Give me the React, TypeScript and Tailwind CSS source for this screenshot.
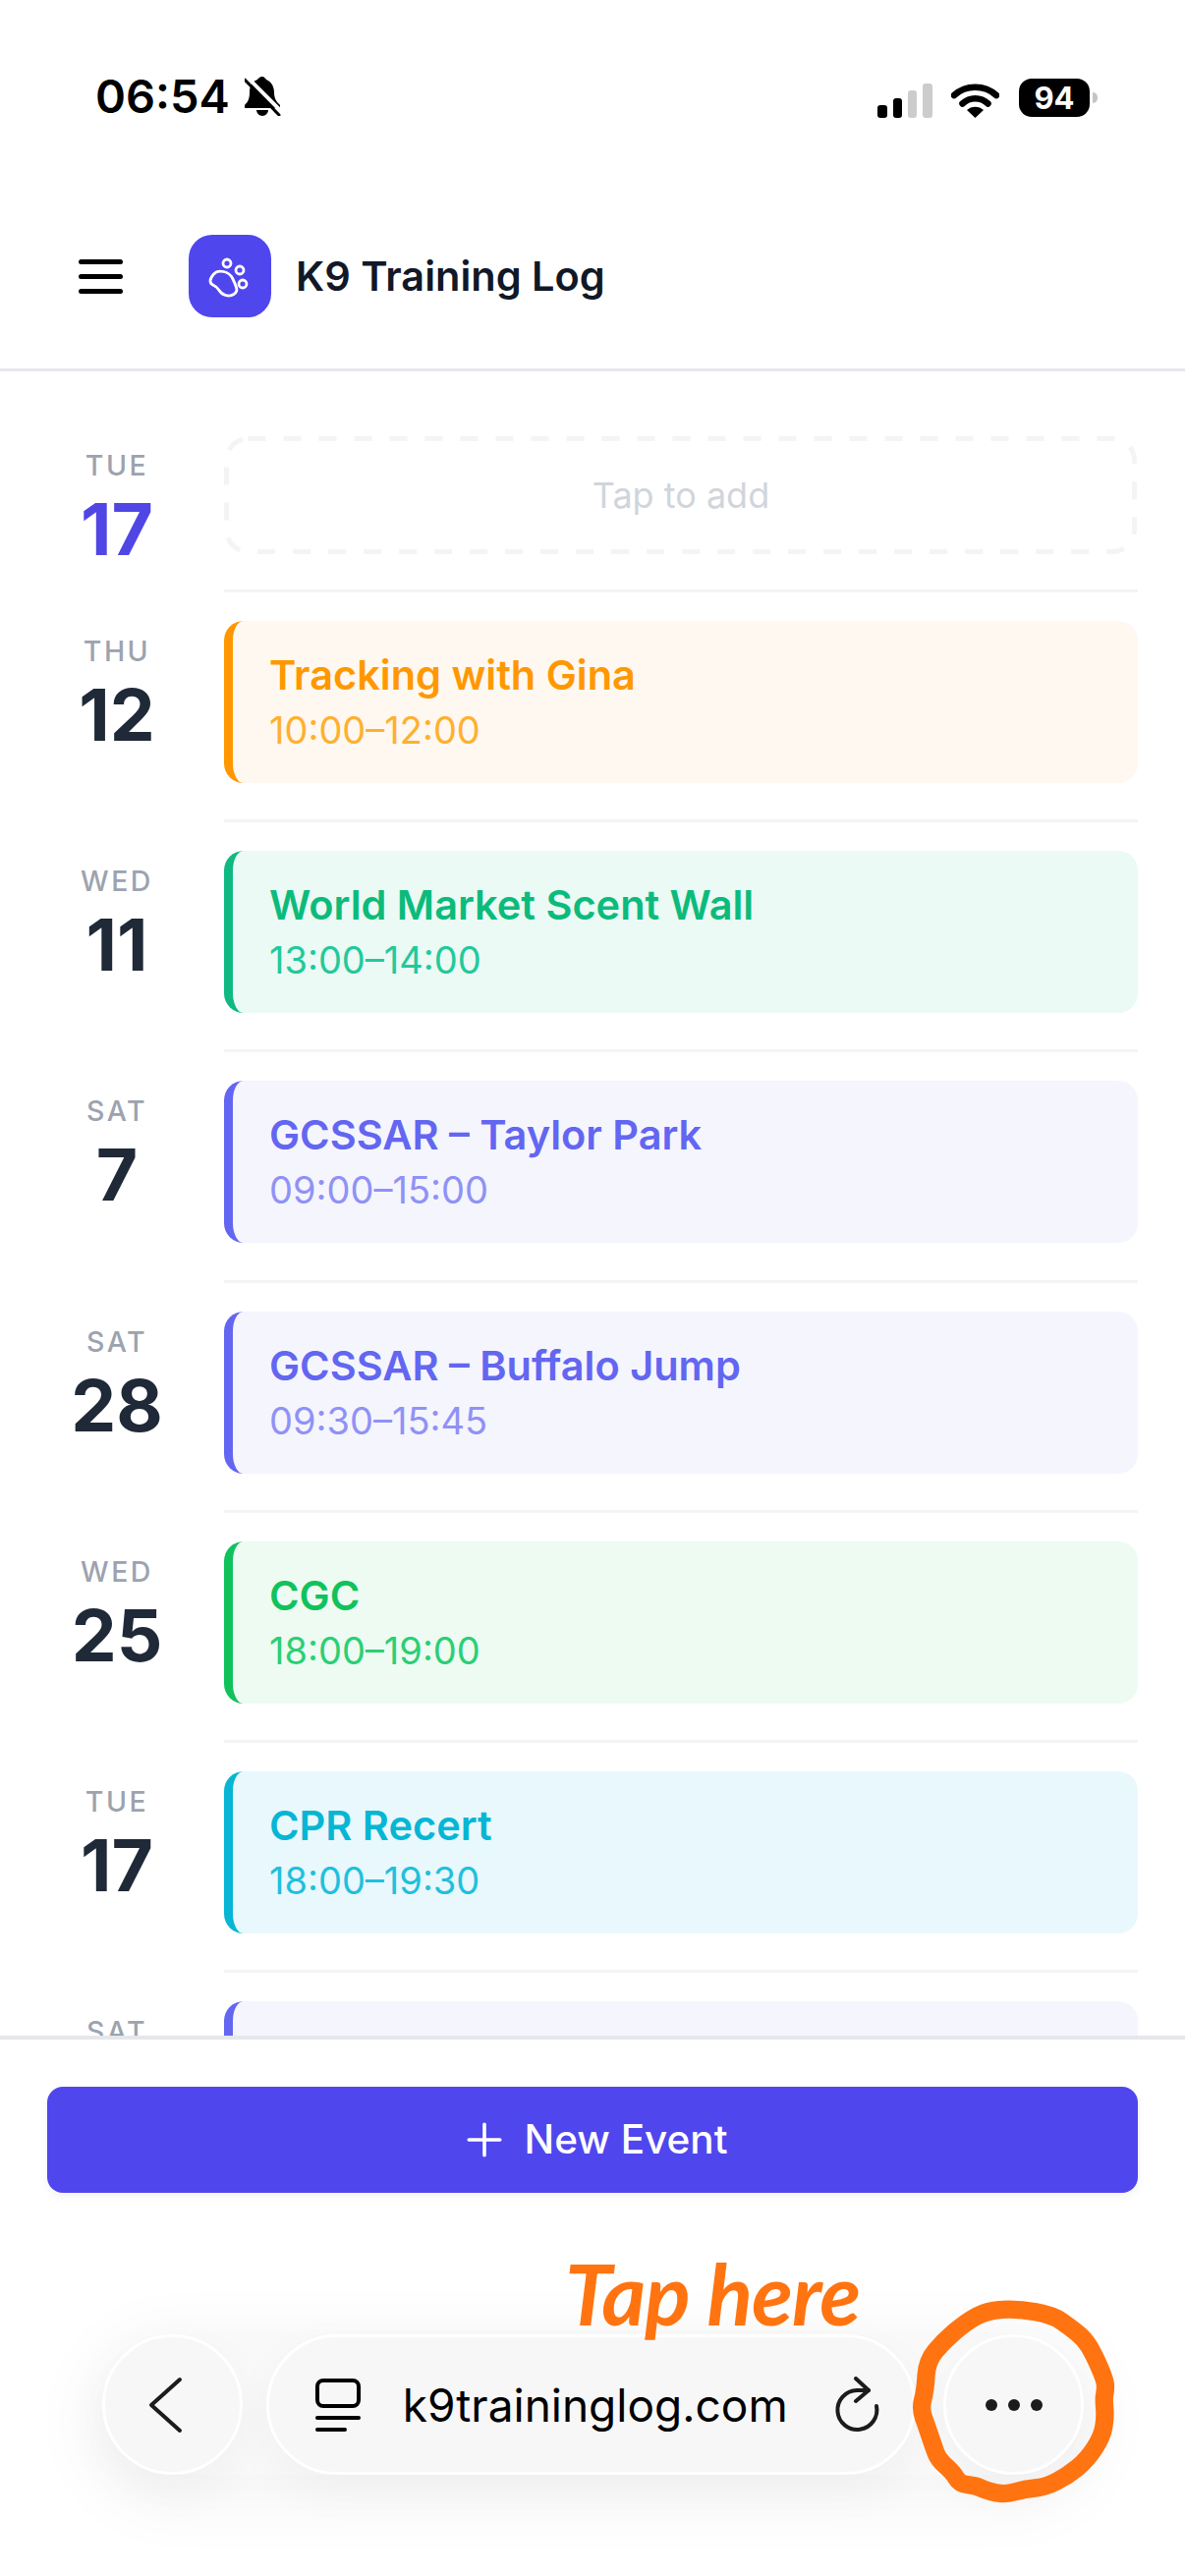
import { Plus } from 'lucide-react'

type Row = {
  day: string
  date: string
  title?: string
  time?: string
  card: string
  titleColor: string
  timeColor: string
}

const rows: Row[] = [
  { day: 'THU', date: '12', title: 'Tracking with Gina', time: '10:00–12:00', card: 'bg-[#fef8f0] border-[#ff9800]', titleColor: 'text-[#ff9800]', timeColor: 'text-[#ffb02e]' },
  { day: 'WED', date: '11', title: 'World Market Scent Wall', time: '13:00–14:00', card: 'bg-[#ebfaf5] border-[#10b981]', titleColor: 'text-[#0cbb7b]', timeColor: 'text-[#22c99a]' },
  { day: 'SAT', date: '7', title: 'GCSSAR – Taylor Park', time: '09:00–15:00', card: 'bg-[#f5f5fe] border-[#6366f1]', titleColor: 'text-[#6366f1]', timeColor: 'text-[#8f92f5]' },
  { day: 'SAT', date: '28', title: 'GCSSAR – Buffalo Jump', time: '09:30–15:45', card: 'bg-[#f5f5fe] border-[#6366f1]', titleColor: 'text-[#6366f1]', timeColor: 'text-[#8f92f5]' },
  { day: 'WED', date: '25', title: 'CGC', time: '18:00–19:00', card: 'bg-[#edfbf3] border-[#10c25c]', titleColor: 'text-[#10c25c]', timeColor: 'text-[#2bcf74]' },
  { day: 'TUE', date: '17', title: 'CPR Recert', time: '18:00–19:30', card: 'bg-[#e9f8fd] border-[#06b6d4]', titleColor: 'text-[#06b6d4]', timeColor: 'text-[#1fc0dc]' },
  { day: 'SAT', date: '', card: 'bg-[#f5f5fe] border-[#6366f1]', titleColor: '', timeColor: '' },
]

// closed smooth curve through a list of points, midpoint quadratic style
function smooth(points: number[][]) {
  const mid = (a: number[], b: number[]) => `${(a[0] + b[0]) / 2} ${(a[1] + b[1]) / 2}`
  let d = `M${mid(points[points.length - 1], points[0])}`
  points.forEach((p, i) => {
    d += ` Q${p[0]} ${p[1]} ${mid(p, points[(i + 1) % points.length])}`
  })
  return d + 'Z'
}

const scribble = [
  [190, 310], [240, 250], [310, 190], [375, 155], [470, 150], [575, 170], [625, 205], [670, 240],
  [700, 290], [735, 370], [735, 400], [730, 425], [735, 480], [725, 540], [680, 610], [620, 660],
  [550, 695], [490, 700], [430, 718], [370, 705], [340, 690], [290, 685], [270, 650], [225, 610],
  [210, 570], [190, 510], [170, 455], [185, 400],
]

const pawPad = [[22, 44], [29, 36], [42, 39], [47, 49], [50, 58], [42, 63], [33, 60], [29, 53], [22, 50]]

function DateColumn({ day, date, highlight }: { day: string; date: string; highlight?: boolean }) {
  return (
    <div className="w-[142px] shrink-0 flex flex-col items-center">
      <span className="text-[28.500px] leading-[34px] font-medium tracking-[2.500px] text-[#9ca3af]">{day}</span>
      {date && (
        <span className={`mt-[8px] text-[73px] leading-[80px] font-bold ${highlight ? 'text-[#4f46e5]' : 'text-[#1f2937]'}`}>
          {date}
        </span>
      )}
    </div>
  )
}

function StatusBar() {
  return (
    <div className="h-[184px] shrink-0 flex items-start justify-between pt-[71px] pl-[97px] pr-[89px]">
      <div className="flex items-center gap-[15px] h-[54px]">
        <span className="text-[47px] leading-[54px] font-semibold text-black">06:54</span>
        <svg width="38" height="40" viewBox="0 0 38 40">
          <path d="M18 0c-3 0-4 2-5 3-6 2-8 7-8 13 0 7-2 10-5 13v3h36v-3c-3-3-6-6-6-13 0-6-3-11-8-13-1-1-2-3-4-3z" fill="#000" />
          <path d="M12 34h12c0 3-3 6-6 6s-6-3-6-6z" fill="#000" />
          <path d="M2 0l36 36" stroke="#fff" strokeWidth="4" />
          <path d="M0 3l35 36" stroke="#000" strokeWidth="3" strokeLinecap="round" />
        </svg>
      </div>
      <div className="flex items-center h-[54px]">
        <svg width="56" height="35" viewBox="0 0 56 35" className="mr-[19px] mt-[8px]">
          <rect x="0" y="22" width="10" height="13" rx="3" fill="#000" />
          <rect x="16" y="15" width="9" height="20" rx="3" fill="#000" />
          <rect x="31" y="7" width="9" height="28" rx="3" fill="#ccc" />
          <rect x="46" y="0" width="10" height="35" rx="3" fill="#ccc" />
        </svg>
        <svg width="49" height="35" viewBox="0 0 49 35" className="mr-[20px] mt-[8px]">
          <path d="M3 12c12-11 31-11 43 0" fill="none" stroke="#000" strokeWidth="6.5" strokeLinecap="round" />
          <path d="M11.500 20.500c7.500-7 18.500-7 26 0" fill="none" stroke="#000" strokeWidth="6.5" strokeLinecap="round" />
          <path d="M16 27c4.500-4.500 12.500-4.500 17 0l-8.500 8z" fill="#000" />
        </svg>
        <div className="relative w-[72px] h-[39px] rounded-[13px] bg-black flex items-center justify-center mt-[2px]">
          <span className="text-[31px] leading-[39px] font-bold text-white">94</span>
        </div>
        <div className="w-[5px] h-[11px] ml-[3px] mt-[2px] rounded-r-full bg-[#c4c4c4]" />
      </div>
    </div>
  )
}

function Header() {
  return (
    <div className="h-[194px] mb-[2px] pt-[3px] shrink-0 flex items-center pl-[80px] border-b-[3px] border-[#e5e7eb]">
      <div className="w-[45px] flex flex-col gap-[10px]">
        <div className="h-[5px] rounded-full bg-black" />
        <div className="h-[5px] rounded-full bg-black" />
        <div className="h-[5px] rounded-full bg-black" />
      </div>
      <div className="ml-[67px] w-[84px] h-[84px] rounded-[24px] bg-[#5046ee] flex items-center justify-center">
        <svg width="84" height="84" viewBox="0 0 84 84" fill="none" stroke="#fff" strokeWidth="2.800">
          <circle cx="39" cy="29" r="4" />
          <circle cx="52" cy="36" r="4" />
          <circle cx="55" cy="50" r="4" />
          <path d={smooth(pawPad)} />
        </svg>
      </div>
      <span className="ml-[25px] text-[41.500px] leading-[52px] font-semibold text-[#111827]">K9 Training Log</span>
    </div>
  )
}

function AddSlot() {
  return (
    <div className="relative h-[120px] flex items-center justify-center">
      <svg className="absolute inset-0" width="929" height="120" fill="none">
        <rect x="2.500" y="2.500" width="924" height="115" rx="22" stroke="#f3f4f6" strokeWidth="5" strokeDasharray="18 18" />
      </svg>
      <span className="text-[36px] leading-[44px] text-[#d1d5db]">Tap to add</span>
    </div>
  )
}

function EventCard({ row }: { row: Row }) {
  return (
    <div className={`h-[165px] rounded-[20px] border-l-[9px] pl-[37px] pb-[3px] flex flex-col justify-center ${row.card}`}>
      {row.title && <div className={`text-[41.500px] leading-[52px] font-semibold ${row.titleColor}`}>{row.title}</div>}
      {row.time && <div className={`text-[38px] leading-[44px] mt-[8px] ${row.timeColor}`}>{row.time}</div>}
    </div>
  )
}

function Toolbar() {
  return (
    <div className="flex items-center w-[999px] mt-[144px] ml-[104px] rounded-full bg-[#f9f9f9] shadow-[0_16px_60px_24px_rgba(0,0,0,0.035)]">
      <div className="w-[143px] h-[143px] rounded-full bg-[#f7f7f8] border-[3px] border-white shadow-[0_16px_50px_rgba(0,0,0,0.04)] flex items-center justify-center">
        <svg width="36" height="60" viewBox="0 0 36 60" fill="none" stroke="#1c1c1e" strokeWidth="4" strokeLinecap="round" strokeLinejoin="round" className="-ml-[12px]">
          <path d="M32 4L3 30l29 26" />
        </svg>
      </div>
      <div className="ml-[24px] w-[662px] h-[143px] rounded-full bg-[#f7f7f8] border-[3px] border-white shadow-[0_16px_50px_rgba(0,0,0,0.04)] flex items-center pl-[47px]">
        <svg width="46" height="54" viewBox="0 0 46 54" fill="none" stroke="#000" strokeWidth="4" strokeLinecap="round">
          <rect x="2" y="2" width="42" height="26" rx="6" />
          <path d="M2 40h42" />
          <path d="M2 52h28" />
        </svg>
        <span className="ml-[43px] text-[46px] leading-[56px] text-black">k9traininglog.com</span>
        <svg width="50" height="58" viewBox="0 0 50 58" fill="none" stroke="#1c1c1e" strokeWidth="4" strokeLinecap="round" strokeLinejoin="round" className="ml-[45px]">
          <path d="M45 30A20 20 0 1 1 25 14h12" />
          <path d="M24 2l13 12-13 11" />
        </svg>
      </div>
      <div className="ml-[28px] w-[143px] h-[143px] rounded-full bg-[#f7f7f8] border-[3px] border-white shadow-[0_16px_50px_rgba(0,0,0,0.04)] flex items-center justify-center gap-[11px]">
        <div className="w-[12px] h-[12px] rounded-full bg-[#1c1c1e]" />
        <div className="w-[12px] h-[12px] rounded-full bg-[#1c1c1e]" />
        <div className="w-[12px] h-[12px] rounded-full bg-[#1c1c1e]" />
      </div>
    </div>
  )
}

export default function App() {
  return (
    <div className="relative w-[1206px] h-[2622px] bg-white overflow-hidden flex flex-col font-['Inter',sans-serif]">
      <StatusBar />
      <Header />

      {/* agenda rows, the last one runs under the footer */}
      <div className="flex-1 min-h-0 overflow-hidden px-[48px]">
        <div className="flex gap-[38px]">
          <div className="pt-[77px]">
            <DateColumn day="TUE" date="17" highlight />
          </div>
          <div className="flex-1 pt-[64px] pb-[36px] border-b-[3px] border-[#f3f4f6]">
            <AddSlot />
          </div>
        </div>
        {rows.map((row, i) => (
          <div key={i} className="flex gap-[38px]">
            <div className="pt-[43px]">
              <DateColumn day={row.day} date={row.date} />
            </div>
            <div className="flex-1 pt-[29px] pb-[37.200px] border-b-[3px] border-[#f3f4f6]">
              <EventCard row={row} />
            </div>
          </div>
        ))}
      </div>

      <div className="h-[550px] shrink-0 border-t-[4px] border-[#e5e7eb] bg-white pt-[48px]">
        <div className="mx-[48px] h-[108px] rounded-[16px] bg-[#5046ee] shadow-[0_4px_10px_rgba(0,0,0,0.05)] flex items-center justify-center text-white">
          <Plus size={54} strokeWidth={1.6} />
          <span className="ml-[14px] text-[40.500px] leading-[50px] font-medium">New Event</span>
        </div>
        <Toolbar />
      </div>

      {/* orange marker note over the browser toolbar */}
      <span className="absolute left-[575px] top-[2284px] text-[86px] leading-[100px] italic font-bold tracking-[-1px] text-[#ff7411] font-['Lato',sans-serif]">
        Tap here
      </span>
      <svg className="absolute left-[880px] top-[2300px]" width="280" height="280" viewBox="0 0 840 840" fill="none">
        <path d={smooth(scribble)} stroke="#ff7411" strokeWidth="55" strokeLinejoin="round" />
      </svg>
    </div>
  )
}
